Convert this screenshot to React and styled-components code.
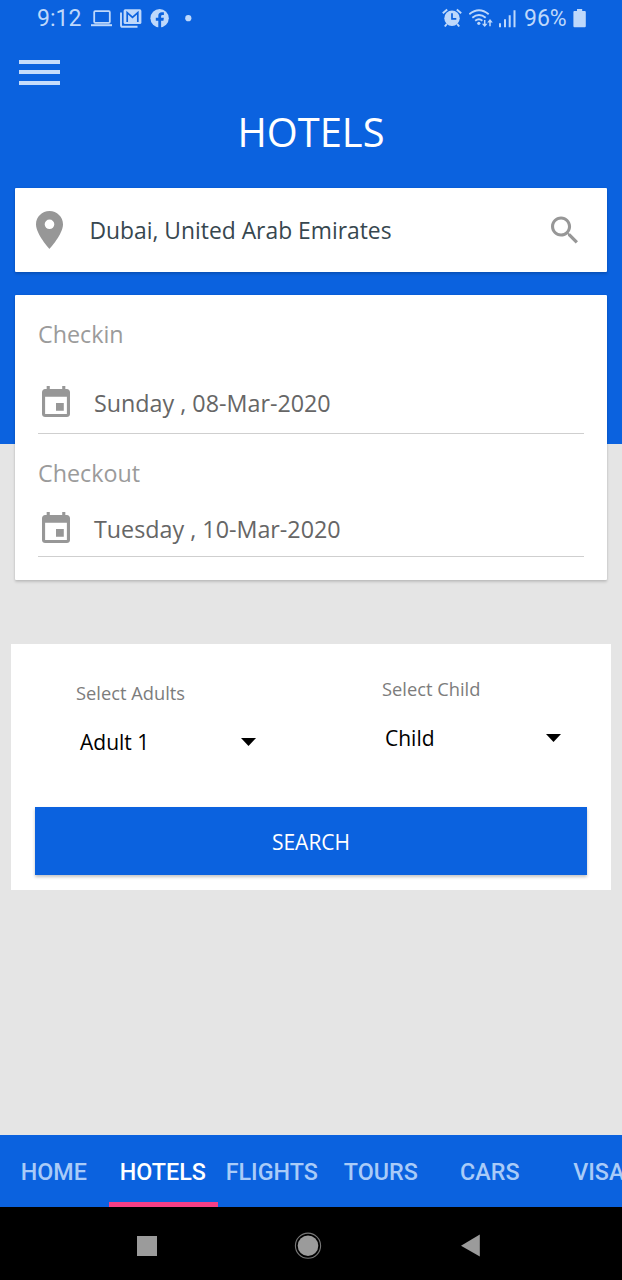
import React from 'react';
import styled, { createGlobalStyle } from 'styled-components';

const BLUE = '#0b62df';
const PALE = '#bed8fb';

const GlobalStyle = createGlobalStyle`
  *, *::before, *::after { box-sizing: border-box; }
  body { margin: 0; font-family: 'Open Sans', 'Noto Sans', sans-serif; }
  svg { display: block; flex: none; }
`;

const Screen = styled.div`
  display: flex;
  flex-direction: column;
  width: 622px;
  height: 1280px;
  overflow: hidden;
  background: linear-gradient(${BLUE} 444px, #e5e5e5 444px);
`;

const StatusBar = styled.header`
  display: flex;
  justify-content: space-between;
  height: 38px;
  padding: 0 35px 0 37px;
  color: ${PALE};
  font-family: Roboto, sans-serif;
`;

const StatusGroup = styled.div`
  display: flex;
  height: 38px;
`;

const StatusText = styled.span`
  width: ${(p) => p.$width}px;
  font-size: 23px;
  line-height: 38px;
  white-space: nowrap;
`;

const MenuButton = styled.button`
  display: flex;
  flex-direction: column;
  gap: 6.25px;
  width: 41px;
  margin: 22px 0 0 19px;
  padding: 0;
  border: 0;
  background: none;
`;

const MenuLine = styled.span`
  height: 4px;
  background: #c6dcfb;
`;

const Title = styled.h1`
  margin: 19.5px 0 0;
  height: 56px;
  color: #fff;
  font-size: 39.8px;
  font-weight: 400;
  line-height: 56px;
  text-align: center;
`;

const Card = styled.section`
  margin: 0 15px;
  background: #fff;
  border-radius: 1px;
  box-shadow: 0 2px 3px rgba(0, 0, 0, 0.16), 0 0 2px rgba(0, 0, 0, 0.1);
`;

const LocationCard = styled(Card)`
  display: flex;
  align-items: center;
  height: 84px;
  margin-top: 28px;
  padding: 0 29.5px 0 20.5px;
`;

const LocationText = styled.span`
  flex: 1;
  margin-left: 27px;
  padding-top: 2px;
  color: #37474f;
  font-size: 22.85px;
  line-height: 32px;
  white-space: nowrap;
`;

const DatesCard = styled(Card)`
  height: 285px;
  margin-top: 23px;
  padding: 22px 23px 0;
`;

const DateLabel = styled.div`
  margin-top: ${(p) => p.$top}px;
  color: #9b9b9b;
  font-size: 23.3px;
  line-height: 34px;
`;

const DateField = styled.div`
  display: flex;
  align-items: center;
  height: ${(p) => p.$height}px;
  padding: ${(p) => p.$top}px 0 0 4px;
  border-bottom: 1px solid #cfcfcf;
`;

const DateValue = styled.span`
  margin: 3px 0 0 24px;
  color: #666;
  font-size: 23.3px;
  line-height: 34px;
  white-space: nowrap;
`;

const GuestsPanel = styled.section`
  height: 246px;
  margin: 64px 11px 0;
  padding: 0 24px;
  background: #fff;
`;

const Guests = styled.div`
  display: flex;
  height: 163px;
`;

const GuestField = styled.div`
  width: ${(p) => p.$width}px;
  padding: ${(p) => p.$top}px 0 0 41px;
`;

const GuestLabel = styled.div`
  color: #7c7c7c;
  font-size: 18.3px;
  line-height: 26px;
`;

const GuestSelect = styled.div`
  display: flex;
  align-items: center;
  justify-content: space-between;
  width: 176px;
  margin: 20px 0 0 ${(p) => p.$indent}px;
  color: #000;
  font-size: 21px;
  line-height: 32px;
`;

const SearchButton = styled.button`
  display: block;
  width: 552px;
  height: 68px;
  padding: 1px 0 0;
  border: 0;
  background: ${BLUE};
  box-shadow: 0 2px 3px rgba(0, 0, 0, 0.24);
  color: #fff;
  font-family: inherit;
  font-size: 21px;
  line-height: 68px;
`;

const Tabs = styled.nav`
  display: grid;
  grid-template-columns: repeat(6, 109px);
  flex: none;
  height: 72px;
  margin-top: auto;
  background: ${BLUE};
  overflow: hidden;
`;

const Tab = styled.span`
  height: 72px;
  padding-right: 1.4px;
  border-bottom: 5px solid ${(p) => (p.$active ? '#f63f85' : 'transparent')};
  color: ${(p) => (p.$active ? '#fff' : '#a9cbf8')};
  font: 500 23.3px/74px Roboto, sans-serif;
  text-align: center;
`;

const SystemBar = styled.footer`
  display: flex;
  align-items: center;
  flex: none;
  height: 73px;
  padding: 4px 0 0 137px;
  background: #000;
`;

const LaptopIcon = () => (
  <svg width="22" height="38" viewBox="91 0 22 38" fill="none" stroke={PALE}>
    <rect x="94.2" y="11.2" width="15.6" height="11.6" rx="1" strokeWidth="1.8" />
    <path d="M91 25.2h21" strokeWidth="2" />
  </svg>
);

const MailStackIcon = () => (
  <svg width="23" height="38" viewBox="120 0 23 38">
    <path d="M121 12.5v12.7q0 1.6 1.6 1.6H137.5" fill="none" stroke={PALE} strokeWidth="1.9" />
    <rect x="123.6" y="9.3" width="17.8" height="14.7" rx="1.6" fill={PALE} />
    <path d="M127.2 22V12.6l5.3 4.7 5.3-4.7V22" fill="none" stroke={BLUE} strokeWidth="1.7" />
  </svg>
);

const FacebookIcon = () => (
  <svg width="20" height="38" viewBox="150 0 20 38">
    <circle cx="159.6" cy="18.3" r="9.2" fill={PALE} />
    <path d="M158.3 28v-7.2h-2.5v-3h2.5v-2q0-3.5 3.6-3.5h2v2.7h-1.5q-1.3 0-1.3 1.3v1.5h2.8l-.5 3h-2.3V28z" fill={BLUE} />
  </svg>
);

const DotIcon = () => (
  <svg width="8" height="38" viewBox="184 0 8 38">
    <circle cx="188.3" cy="18.2" r="3.1" fill={PALE} />
  </svg>
);

const AlarmIcon = () => (
  <svg width="20" height="38" viewBox="442 0 20 38" fill="none" stroke={PALE}>
    <circle cx="452" cy="18.2" r="7.7" fill={PALE} stroke="none" />
    <path d="M442.8 13.2l4.4-3.7M461.2 13.2l-4.4-3.7M446.8 24l-2 2.5M457.2 24l2 2.5" strokeWidth="2" />
    <path d="M452 13.2v5.6h4.3" stroke={BLUE} strokeWidth="1.7" />
  </svg>
);

const WifiIcon = () => (
  <svg width="24" height="38" viewBox="469 0 24 38" fill="none" stroke={PALE} strokeWidth="1.9">
    <path d="M469.3 14.2q9.7-8 19.4 0M472.3 17.7q6.7-5.4 13.4 0M475.2 20.8q3.8-2.9 7.2 0" />
    <circle cx="478.8" cy="23.3" r="1.6" fill={PALE} stroke="none" />
    <path d="M484.7 20v5.5M490 26.3v-5.5" strokeWidth="1.5" />
    <path d="M481.9 23.7h5.6l-2.8 3.4zM487.2 22.4h5.6l-2.8-3.4z" fill={PALE} stroke="none" />
  </svg>
);

const SignalIcon = () => (
  <svg width="18" height="38" viewBox="499 0 18 38" fill={PALE}>
    <path d="M499 23.3h2v3.9h-2zM504 19.3h2v7.9h-2zM508.7 15.3h2v11.9h-2zM513.5 10.3h2v16.9h-2z" />
  </svg>
);

const BatteryIcon = () => (
  <svg width="14" height="38" viewBox="573 0 14 38" fill={PALE}>
    <path d="M577 9h5.2v2h2.6q1 0 1 1v14q0 1.2-1 1.2h-10.4q-1 0-1-1.2v-14q0-1 1-1h2.600z" />
  </svg>
);

const PinIcon = () => (
  <svg width="27" height="38" viewBox="5 2 14 20" preserveAspectRatio="none" fill="#979797">
    <path d="M12 2C8.130 2 5 5.130 5 9c0 5.250 7 13 7 13s7-7.750 7-13c0-3.870-3.130-7-7-7zm0 9.500a2.500 2.500 0 0 1 0-5 2.500 2.500 0 0 1 0 5z" />
  </svg>
);

const SearchIcon = () => (
  <svg width="27" height="27" viewBox="3 3.300 17.490 17.490" fill="#979797" overflow="visible">
    <path d="M15.500 14h-.79l-.28-.27C15.410 12.590 16 11.110 16 9.500 16 5.910 13.090 3 9.500 3S3 5.910 3 9.500 5.910 16 9.500 16c1.610 0 3.090-.59 4.230-1.570l.27.28v.79l5 4.990L20.490 19l-4.990-5zm-6 0C7.010 14 5 11.990 5 9.500S7.010 5 9.500 5 14 7.010 14 9.500 11.990 14 9.500 14z" />
  </svg>
);

const CalendarIcon = () => (
  <svg width="28" height="31" viewBox="3 1 18 20" preserveAspectRatio="none" fill="#979797">
    <path d="M17 12h-5v5h5v-5zM16 1v2H8V1H6v2H5c-1.110 0-1.990.9-1.990 2L3 19c0 1.100.89 2 2 2h14c1.100 0 2-.9 2-2V5c0-1.100-.9-2-2-2h-1V1h-2zm3 18H5V8h14v11z" />
  </svg>
);

const CaretIcon = () => (
  <svg width="15" height="8" viewBox="0 0 15 8">
    <path d="M0 0h15L7.500 8z" fill="#000" />
  </svg>
);

const SystemIcons = () => (
  <svg width="344" height="30" viewBox="137 1231 344 30" fill="#9b9b9b">
    <rect x="137" y="1236" width="20" height="20" />
    <circle cx="308" cy="1245.7" r="10.3" />
    <circle cx="308" cy="1245.7" r="12.6" fill="none" stroke="#777" strokeWidth="1.1" />
    <path d="M461 1245.700l18.800-11.200v22z" />
  </svg>
);

const Gap = styled.span`
  width: ${(p) => p.$w}px;
`;

const TABS = ['HOME', 'HOTELS', 'FLIGHTS', 'TOURS', 'CARS', 'VISA'];

export default function App() {
  return (
    <Screen>
      <GlobalStyle />
      <StatusBar>
        <StatusGroup>
          <StatusText $width={54}>9:12</StatusText>
          <LaptopIcon />
          <Gap $w={7} />
          <MailStackIcon />
          <Gap $w={7} />
          <FacebookIcon />
          <Gap $w={14} />
          <DotIcon />
        </StatusGroup>
        <StatusGroup>
          <AlarmIcon />
          <Gap $w={7} />
          <WifiIcon />
          <Gap $w={6} />
          <SignalIcon />
          <Gap $w={7} />
          <StatusText $width={49}>96%</StatusText>
          <BatteryIcon />
        </StatusGroup>
      </StatusBar>
      <MenuButton aria-label="Menu">
        <MenuLine />
        <MenuLine />
        <MenuLine />
      </MenuButton>
      <Title>HOTELS</Title>
      <LocationCard>
        <PinIcon />
        <LocationText>Dubai, United Arab Emirates</LocationText>
        <SearchIcon />
      </LocationCard>
      <DatesCard>
        <DateLabel $top={0}>Checkin</DateLabel>
        <DateField $height={83} $top={18}>
          <CalendarIcon />
          <DateValue>Sunday , 08-Mar-2020</DateValue>
        </DateField>
        <DateLabel $top={22}>Checkout</DateLabel>
        <DateField $height={67} $top={9}>
          <CalendarIcon />
          <DateValue>Tuesday , 10-Mar-2020</DateValue>
        </DateField>
      </DatesCard>
      <GuestsPanel>
        <Guests>
          <GuestField $width={306} $top={36}>
            <GuestLabel>Select Adults</GuestLabel>
            <GuestSelect $indent={4}>
              Adult 1
              <CaretIcon />
            </GuestSelect>
          </GuestField>
          <GuestField $width={246} $top={32}>
            <GuestLabel>Select Child</GuestLabel>
            <GuestSelect $indent={3}>
              Child
              <CaretIcon />
            </GuestSelect>
          </GuestField>
        </Guests>
        <SearchButton>SEARCH</SearchButton>
      </GuestsPanel>
      <Tabs>
        {TABS.map((name) => (
          <Tab key={name} $active={name === 'HOTELS'}>{name}</Tab>
        ))}
      </Tabs>
      <SystemBar>
        <SystemIcons />
      </SystemBar>
    </Screen>
  );
}
